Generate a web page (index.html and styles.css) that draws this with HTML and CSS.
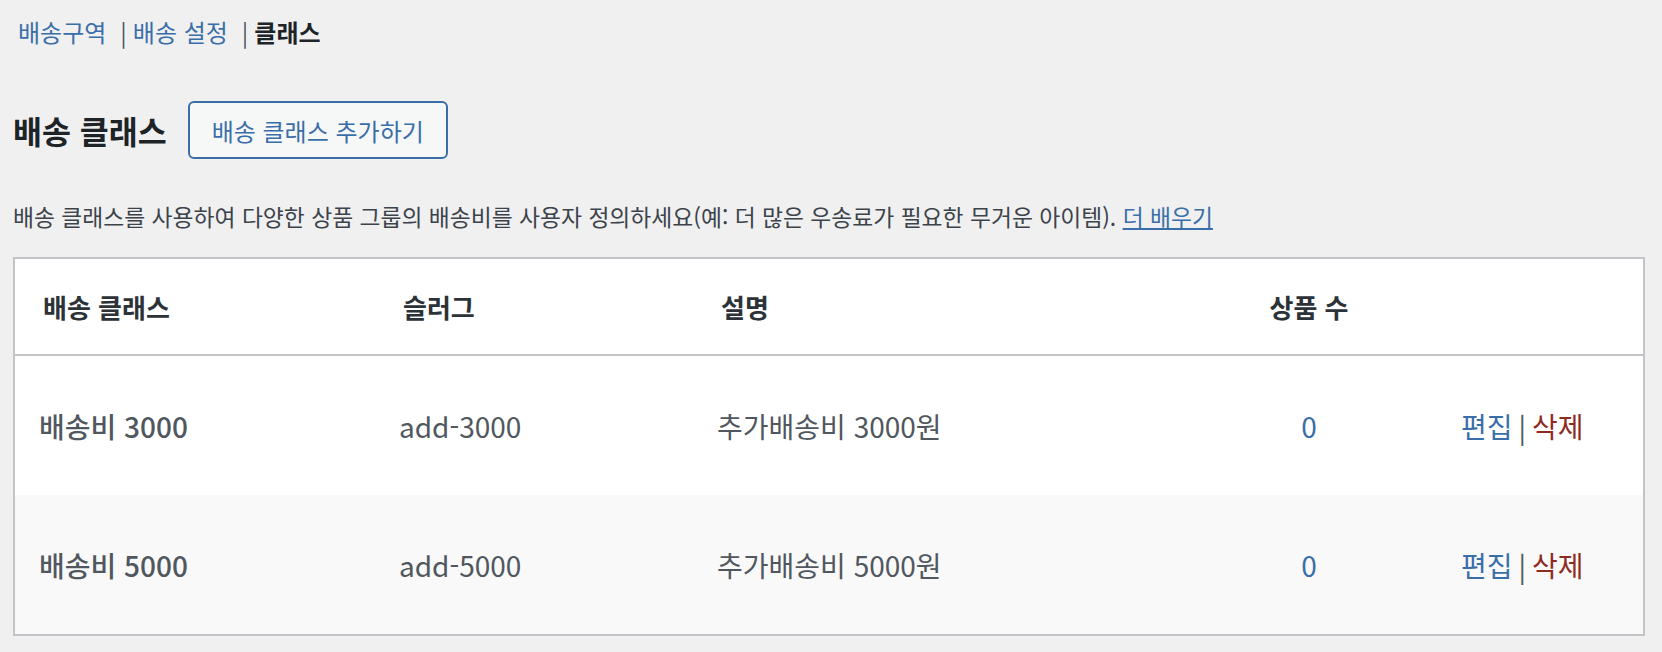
FILE: index.html
```html
<!DOCTYPE html>
<html lang="ko">
<head>
  <meta charset="UTF-8">
  <meta name="viewport" content="width=device-width, initial-scale=1.0">
  <title>배송 클래스</title>
  <link rel="stylesheet" href="styles.css">
</head>
<body>

  <ul class="subnav">
    <li><a href="#">배송구역</a><span class="sep">|</span></li>
    <li><a href="#">배송 설정</a><span class="sep">|</span></li>
    <li class="current">클래스</li>
  </ul>

  <div class="titleRow">
    <h2>배송 클래스</h2>
    <button class="addButton">배송 클래스 추가하기</button>
  </div>

  <p class="intro">배송 클래스를 사용하여 다양한 상품 그룹의 배송비를 사용자 정의하세요(예: 더 많은 우송료가 필요한 무거운 아이템). <a href="#">더 배우기</a></p>

  <table class="classTable">
    <colgroup>
      <col class="colName">
      <col class="colSlug">
      <col class="colDesc">
      <col class="colCount">
      <col class="colActions">
    </colgroup>
    <thead>
      <tr>
        <th>배송 클래스</th>
        <th>슬러그</th>
        <th>설명</th>
        <th class="count">상품 수</th>
        <th></th>
      </tr>
    </thead>
    <tbody>
      <tr>
        <td class="name">배송비 3000</td>
        <td>add-3000</td>
        <td>추가배송비 3000원</td>
        <td class="count"><a href="#">0</a></td>
        <td class="actions"><a href="#">편집</a><span class="sep">|</span><a href="#" class="delete">삭제</a></td>
      </tr>
      <tr>
        <td class="name">배송비 5000</td>
        <td>add-5000</td>
        <td>추가배송비 5000원</td>
        <td class="count"><a href="#">0</a></td>
        <td class="actions"><a href="#">편집</a><span class="sep">|</span><a href="#" class="delete">삭제</a></td>
      </tr>
    </tbody>
  </table>

</body>
</html>
```

FILE: styles.css
```css
body {
  margin: 0;
  padding: 0 17px 0 13px;
  background-color: #f0f0f1;
  font-family: "Noto Sans CJK KR", "Noto Sans", sans-serif;
  color: #3c434a;
}

a {
  color: #3a6ea8;
  text-decoration: none;
}

.subnav {
  list-style: none;
  margin: 12px 0 0 5px;
  padding: 0;
  display: flex;
  font-size: 24px;
  line-height: 40px;
}

.subnav .sep {
  color: #50575e;
  margin: 0 6px 0 14px;
}

.subnav .current {
  font-weight: bold;
  color: #1d2327;
}

.titleRow {
  display: flex;
  align-items: center;
  margin-top: 49px;
  height: 58px;
}

.titleRow h2 {
  margin: 0 21px 0 0;
  font-size: 31.5px;
  font-weight: bold;
  color: #1d2327;
}

.addButton {
  width: 260px;
  height: 58px;
  border: 2px solid #3a6ea8;
  border-radius: 6px;
  background-color: #f6f7f7;
  color: #3a6ea8;
  font-family: inherit;
  font-size: 24px;
}

.intro {
  margin: 40px 0 22px;
  font-size: 22.8px;
  line-height: 36px;
  color: #3c434a;
}

.intro a {
  text-decoration: underline;
}

.classTable {
  width: 100%;
  border-collapse: collapse;
  table-layout: fixed;
  background-color: #fff;
  border: 2px solid #c3c4c7;
}

.colName { width: 361px; }
.colSlug { width: 318px; }
.colDesc { width: 488px; }
.colCount { width: 256px; }

.classTable th {
  height: 95px;
  padding: 0 0 0 28px;
  text-align: left;
  font-size: 26px;
  font-weight: 600;
  color: #2c3338;
  border-bottom: 2px solid #c3c4c7;
}

.classTable td {
  height: 139px;
  padding: 0 0 0 24px;
  font-size: 28px;
  color: #50575e;
}

.classTable tbody tr:nth-child(2) {
  background-color: #f9f9f9;
}

.classTable .name {
  font-weight: 500;
}

.classTable .count {
  text-align: center;
  padding-left: 0;
}

.actions .sep {
  color: #50575e;
  margin: 0 6px;
}

.actions .delete {
  color: #8f2a1f;
}
```
